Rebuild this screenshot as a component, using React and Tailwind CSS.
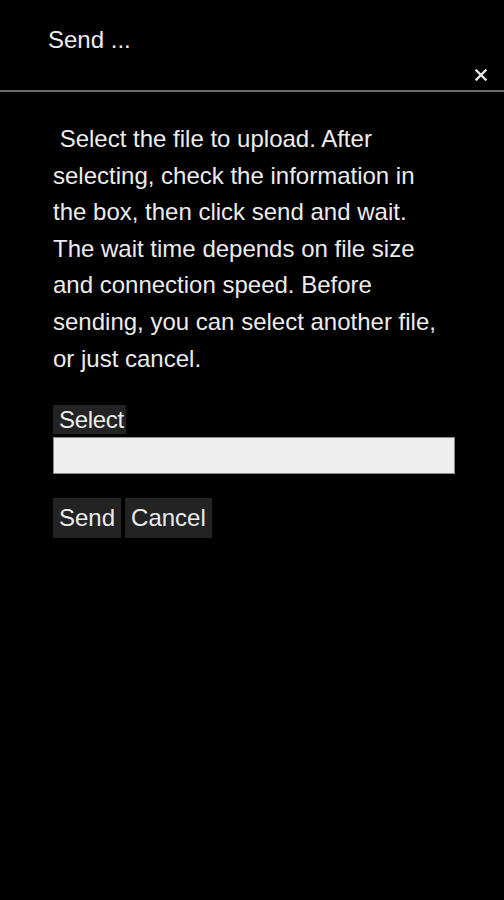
import React from "react";

const App = () => {
  return (
    <div className="min-h-[900px] w-full bg-black text-[#ececec]" style={{ fontFamily: '"Liberation Sans", Arial, sans-serif' }}>
      <div className="relative h-[92px] border-b-2 border-[#6b6b6b]">
        <h1 className="pl-[48px] pt-[26px] text-[24px] leading-[28px] font-normal">Send ...</h1>
        <button type="button" className="absolute left-[475px] top-[69px] text-[#e6e6e6]" aria-label="Close">
          <svg width="12" height="12" viewBox="0 0 12 12" fill="none" stroke="currentColor" strokeWidth="2.4" strokeLinecap="square">
            <path d="M1.5 1.5L10.5 10.5M10.5 1.5L1.5 10.5" />
          </svg>
        </button>
      </div>

      <div className="px-[53px] pt-[29px]">
        <p className="w-[400px] text-[24px] leading-[36.6px]">
          &nbsp;Select the file to upload. After selecting, check the information in the box, then click send and wait. The wait time depends on file size and connection speed. Before sending, you can select another file, or just cancel.
        </p>

        <div className="mt-[28px] flex flex-col items-start">
          <button type="button" className="h-[29px] bg-[#232323] pl-[6px] pr-[2px] text-[24px] leading-[29px] tracking-[-0.3px]">
            Select
          </button>
          <input
            type="text"
            readOnly
            className="mt-[3px] h-[37px] w-[402px] border border-[#8a8a8a] bg-[#eeeeee] outline-none"
          />
        </div>

        <div className="mt-[24px] flex gap-[4px]">
          <button type="button" className="h-[40px] bg-[#232323] px-[6px] text-[24px] leading-[40px]">
            Send
          </button>
          <button type="button" className="h-[40px] bg-[#232323] px-[6px] text-[24px] leading-[40px]">
            Cancel
          </button>
        </div>
      </div>
    </div>
  );
};

export default App;
